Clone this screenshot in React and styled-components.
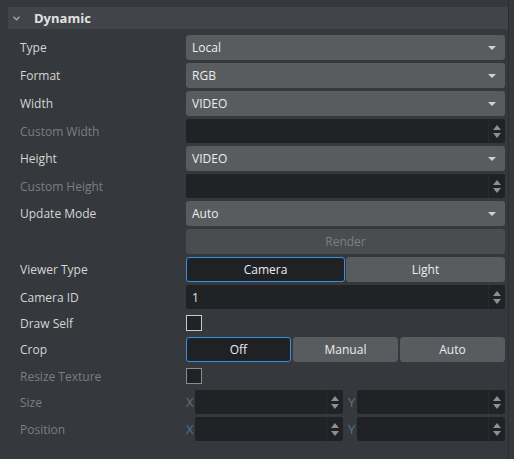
import styled, { createGlobalStyle } from "styled-components";

const Global = createGlobalStyle`
  html, body {
    margin: 0;
    padding: 0;
    background: #35383c;
  }
  body {
    font-family: "Open Sans", "Noto Sans", sans-serif;
    font-size: 12px;
    color: #d9d9d9;
  }
`;

const Frame = styled.div`
  display: flex;
  width: 514px;
  height: 459px;
  overflow: hidden;
`;

const Panel = styled.div`
  width: 508px;
  padding: 7px 0 0 8px;
  box-sizing: border-box;
`;

const ScrollEdge = styled.div`
  width: 1px;
  background: #2b2d31;
`;

const Header = styled.div`
  display: flex;
  align-items: center;
  height: 22px;
  background: #414449;
  margin-bottom: 6px;
`;

const Chevron = styled.svg`
  width: 7px;
  height: 5px;
  margin: 0 14px 0 5px;
`;

const HeaderTitle = styled.span`
  font-weight: 700;
  font-size: 13px;
  color: #e2e2e2;
`;

const Rows = styled.div`
  display: flex;
  flex-direction: column;
  gap: 3px;
  padding-right: 3px;
`;

const Row = styled.div`
  display: flex;
  align-items: center;
  height: ${(p) => p.$h || 25}px;
`;

const Label = styled.div`
  width: 178px;
  padding-left: 12px;
  box-sizing: border-box;
  flex-shrink: 0;
  color: ${(p) => (p.$disabled ? "#7c7e81" : "#d6d6d6")};
  white-space: nowrap;
`;

const Control = styled.div`
  flex: 1;
  display: flex;
  gap: ${(p) => p.$gap || 0}px;
  height: 100%;
  align-items: center;
`;

const Select = styled.div`
  flex: 1;
  height: 100%;
  display: flex;
  align-items: center;
  justify-content: space-between;
  padding: 0 9px 0 6px;
  background: #595c5f;
  border-radius: 3px;
  color: #ececec;
`;

const Caret = styled.span`
  width: 0;
  height: 0;
  border-left: 4px solid transparent;
  border-right: 4px solid transparent;
  border-top: 4px solid #d0d0d0;
`;

const NumberBox = styled.div`
  flex: 1;
  height: 100%;
  display: flex;
  background: #202226;
  border-radius: 2px;
  color: #e4e4e4;
`;

const NumberValue = styled.div`
  flex: 1;
  display: flex;
  align-items: center;
  padding-left: 6px;
`;

const Spinner = styled.div`
  width: 16px;
  display: flex;
  flex-direction: column;
  align-items: center;
  justify-content: center;
  gap: 3px;
  border-left: 1px solid #282a2e;
`;

const Arrow = styled.span`
  width: 0;
  height: 0;
  border-left: 4px solid transparent;
  border-right: 4px solid transparent;
  ${(p) =>
    p.$up
      ? "border-bottom: 5px solid #8d8f92;"
      : "border-top: 5px solid #8d8f92;"}
`;

const Button = styled.div`
  flex: 1;
  height: 100%;
  display: flex;
  align-items: center;
  justify-content: center;
  background: #4a4d50;
  border-radius: 3px;
  color: #7c7e81;
`;

const Segment = styled.div`
  flex: 1;
  height: 100%;
  box-sizing: border-box;
  display: flex;
  align-items: center;
  justify-content: center;
  border-radius: 3px;
  color: #ececec;
  background: ${(p) => (p.$active ? "#1f2125" : "#595c5f")};
  border: 1px solid ${(p) => (p.$active ? "#3a8fe0" : "#595c5f")};
`;

const Check = styled.div`
  width: 16px;
  height: 16px;
  box-sizing: border-box;
  background: #202226;
  border: 1px solid ${(p) => (p.$disabled ? "#8a8c8f" : "#c9c9c9")};
`;

const Axis = styled.span`
  width: 9px;
  flex-shrink: 0;
  margin-left: ${(p) => p.$offset || 0}px;
  color: ${(p) => (p.$blue ? "#4f7496" : "#6e7073")};
  font-size: 13px;
`;

function Dropdown({ value }) {
  return (
    <Select>
      {value}
      <Caret />
    </Select>
  );
}

function NumberField({ value }) {
  return (
    <NumberBox>
      <NumberValue>{value}</NumberValue>
      <Spinner>
        <Arrow $up />
        <Arrow />
      </Spinner>
    </NumberBox>
  );
}

function Vector({ blue }) {
  return (
    <Control>
      <Axis $blue={blue}>X</Axis>
      <NumberField />
      <Axis $blue={blue} $offset={5}>Y</Axis>
      <NumberField />
    </Control>
  );
}

export default function App() {
  return (
    <Frame>
      <Global />
      <Panel>
        <Header>
          <Chevron viewBox="0 0 7 5">
            <path d="M0.5 0.8 L3.5 3.8 L6.5 0.8" fill="none" stroke="#a8aaad" strokeWidth="1.3" />
          </Chevron>
          <HeaderTitle>Dynamic</HeaderTitle>
        </Header>
        <Rows>
          <Row>
            <Label>Type</Label>
            <Control><Dropdown value="Local" /></Control>
          </Row>
          <Row>
            <Label>Format</Label>
            <Control><Dropdown value="RGB" /></Control>
          </Row>
          <Row>
            <Label>Width</Label>
            <Control><Dropdown value="VIDEO" /></Control>
          </Row>
          <Row $h={24}>
            <Label $disabled>Custom Width</Label>
            <Control><NumberField /></Control>
          </Row>
          <Row>
            <Label>Height</Label>
            <Control><Dropdown value="VIDEO" /></Control>
          </Row>
          <Row $h={24}>
            <Label $disabled>Custom Height</Label>
            <Control><NumberField /></Control>
          </Row>
          <Row>
            <Label>Update Mode</Label>
            <Control><Dropdown value="Auto" /></Control>
          </Row>
          <Row>
            <Label />
            <Control><Button>Render</Button></Control>
          </Row>
          <Row>
            <Label>Viewer Type</Label>
            <Control $gap={1}>
              <Segment $active>Camera</Segment>
              <Segment>Light</Segment>
            </Control>
          </Row>
          <Row $h={24}>
            <Label>Camera ID</Label>
            <Control><NumberField value="1" /></Control>
          </Row>
          <Row $h={22}>
            <Label>Draw Self</Label>
            <Control><Check /></Control>
          </Row>
          <Row>
            <Label>Crop</Label>
            <Control $gap={2}>
              <Segment $active>Off</Segment>
              <Segment>Manual</Segment>
              <Segment>Auto</Segment>
            </Control>
          </Row>
          <Row $h={22}>
            <Label $disabled>Resize Texture</Label>
            <Control><Check $disabled /></Control>
          </Row>
          <Row $h={24}>
            <Label $disabled>Size</Label>
            <Vector />
          </Row>
          <Row $h={24}>
            <Label $disabled>Position</Label>
            <Vector blue />
          </Row>
        </Rows>
      </Panel>
      <ScrollEdge />
    </Frame>
  );
}
